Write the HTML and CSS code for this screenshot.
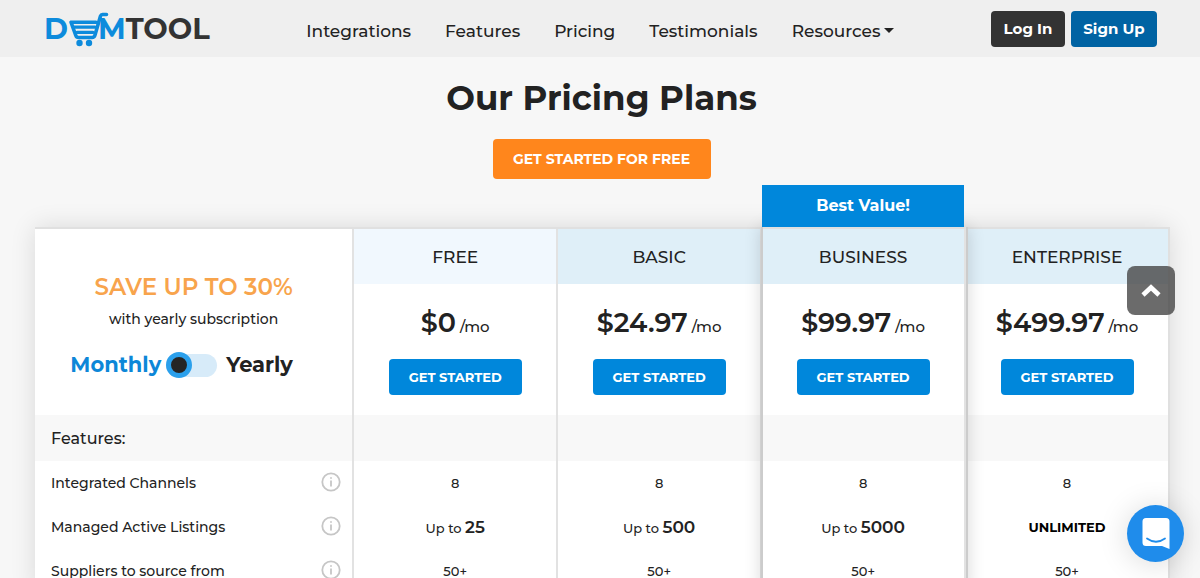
FILE: index.html
```html
<!DOCTYPE html>
<html lang="en">
<head>
<meta charset="utf-8">
<meta name="viewport" content="width=device-width, initial-scale=1">
<title>DSMTool Pricing</title>
<link rel="stylesheet" href="styles.css">
</head>
<body>
<header class="site-header">
  <a class="logo" href="#" aria-label="DSMTool">
    <span class="logo-blue">D</span>
    <svg class="logo-cart" viewBox="0 0 42 36" aria-hidden="true">
      <g fill="none" stroke="#0d8bdc" stroke-width="3.6" stroke-linejoin="round" stroke-linecap="round">
        <path d="M38.500 3.500H34.500Q33 3.500 32.500 5L27 24Q26.300 26.500 24 26.500H10.500Q8.500 26.500 7.800 24.500L3 11.200H28"/>
        <path d="M6 16.200H27M9 21.400H25" stroke-width="3.2"/>
      </g>
      <circle cx="11.500" cy="32" r="3.200" fill="#0d8bdc"/>
      <circle cx="21" cy="32" r="3.200" fill="#0d8bdc"/>
    </svg>
    <span class="logo-blue logo-m">M</span><span class="logo-dark">TOOL</span>
  </a>
  <nav class="main-nav">
    <a href="#">Integrations</a>
    <a href="#">Features</a>
    <a href="#">Pricing</a>
    <a href="#">Testimonials</a>
    <a class="has-menu" href="#">Resources</a>
  </nav>
  <div class="account">
    <button class="btn btn-dark" type="button">Log In</button>
    <button class="btn btn-navy" type="button">Sign Up</button>
  </div>
</header>

<main>
  <section class="intro">
    <h1>Our Pricing Plans</h1>
    <button class="btn btn-orange" type="button">GET STARTED FOR FREE</button>
  </section>

  <div class="plans">
    <table>
      <colgroup><col class="col-feature"><col class="col-plan"><col class="col-plan"><col class="col-plan"><col class="col-plan"></colgroup>
      <thead>
        <tr class="names">
          <td class="offer" rowspan="2">
            <p class="save">SAVE UP TO 30%</p>
            <p class="note">with yearly subscription</p>
            <label class="billing">
              <span class="monthly">Monthly</span>
              <input class="switch" type="checkbox" aria-label="Yearly billing">
              <span>Yearly</span>
            </label>
          </td>
          <th class="name-free" scope="col">FREE</th>
          <th scope="col">BASIC</th>
          <th scope="col"><span class="best-tab">Best Value!</span>BUSINESS</th>
          <th scope="col">ENTERPRISE</th>
        </tr>
        <tr class="prices">
          <td><p class="price">$0<small> /mo</small></p><button class="btn btn-blue" type="button">GET STARTED</button></td>
          <td><p class="price">$24.97<small> /mo</small></p><button class="btn btn-blue" type="button">GET STARTED</button></td>
          <td><p class="price">$99.97<small> /mo</small></p><button class="btn btn-blue" type="button">GET STARTED</button></td>
          <td><p class="price">$499.97<small> /mo</small></p><button class="btn btn-blue" type="button">GET STARTED</button></td>
        </tr>
      </thead>
      <tbody>
        <tr class="group"><th scope="row">Features:</th><td></td><td></td><td></td><td></td></tr>
        <tr>
          <th scope="row"><div class="feature">Integrated Channels <button class="info" type="button" aria-label="About integrated channels"><svg viewBox="0 0 20 20"><circle cx="10" cy="10" r="8.700"/><path d="M10 5.200v1.600M10 8.500v6"/></svg></button></div></th>
          <td>8</td><td>8</td><td>8</td><td>8</td>
        </tr>
        <tr>
          <th scope="row"><div class="feature">Managed Active Listings <button class="info" type="button" aria-label="About managed active listings"><svg viewBox="0 0 20 20"><circle cx="10" cy="10" r="8.700"/><path d="M10 5.200v1.600M10 8.500v6"/></svg></button></div></th>
          <td>Up to <b>25</b></td><td>Up to <b>500</b></td><td>Up to <b>5000</b></td><td><strong>UNLIMITED</strong></td>
        </tr>
        <tr>
          <th scope="row"><div class="feature">Suppliers to source from <button class="info" type="button" aria-label="About suppliers to source from"><svg viewBox="0 0 20 20"><circle cx="10" cy="10" r="8.700"/><path d="M10 5.200v1.600M10 8.500v6"/></svg></button></div></th>
          <td>50+</td><td>50+</td><td>50+</td><td>50+</td>
        </tr>
      </tbody>
    </table>
  </div>
</main>

<button class="to-top" type="button" aria-label="Back to top">
  <svg viewBox="0 0 24 18"><path d="M4 13L12 5.500L20 13" fill="none" stroke="#fff" stroke-width="4.600"/></svg>
</button>
<button class="chat" type="button" aria-label="Open chat">
  <svg viewBox="0 0 28 32"><path d="M4 0H24Q27.500 0 27.500 3.500V31L20 28H4Q.5 28 .5 24.500V3.500Q.5 0 4 0Z" fill="#fff"/><path d="M5 20.500Q14 27 23 20.500" fill="none" stroke="#1f8ceb" stroke-width="1.800" stroke-linecap="round"/></svg>
</button>
</body>
</html>
```
FILE: styles.css
```css
*, *::before, *::after { box-sizing: border-box; }

body {
  margin: 0;
  background: #f7f7f7;
  color: #222;
  font-family: Montserrat, Inter, "Liberation Sans", sans-serif;
  font-size: 14px;
  font-weight: 500;
}

p, h1 { margin: 0; }
a { color: inherit; text-decoration: none; }
button { font: inherit; cursor: pointer; }

.site-header {
  display: flex;
  align-items: center;
  justify-content: space-between;
  height: 57px;
  padding: 0 43px 0 44px;
  background: #efefef;
}

.logo {
  display: flex;
  align-items: center;
  font-size: 29px;
  font-weight: 700;
  line-height: 36px;
}
.logo-blue { color: #0d8bdc; }
.logo-dark { color: #333; }
.logo-cart { width: 42px; height: 36px; }
.logo-m { margin-left: -12px; }

.main-nav {
  display: flex;
  gap: 34px;
  padding-top: 4px;
  font-size: 17px;
  line-height: 24px;
}
.has-menu { display: flex; align-items: center; gap: 4px; }
.has-menu::after {
  content: "";
  border: 5px solid transparent;
  border-top-color: #222;
  border-bottom: 0;
}

.account { display: flex; gap: 6px; }

.btn {
  height: 36px;
  padding: 0;
  border: 0;
  border-radius: 4px;
  color: #fff;
  font-weight: 700;
}
.btn-dark, .btn-navy { font-size: 15px; }
.btn-dark { width: 74px; background: #333; }
.btn-navy { width: 86px; background: #0063a3; }
.btn-blue { width: 133px; background: #0087db; font-size: 13px; }
.btn-orange {
  width: 218px;
  height: 40px;
  background: #ff861c;
  font-size: 14px;
}

.intro {
  margin: 0 32px 0 35px;
  padding: 17px 0 48px;
  text-align: center;
}
.intro h1 {
  margin-bottom: 17px;
  font-size: 34px;
  font-weight: 700;
  line-height: 48px;
}

.plans {
  position: relative;
  margin: 0 30px 0 35px;
  box-shadow: 0 0 24px rgba(0, 0, 0, .12);
}
/* raised outline around the highlighted plan */
.plans::after {
  content: "";
  position: absolute;
  top: 0;
  bottom: 0;
  left: 64%;
  width: calc(18% + 2px);
  border: solid #ccc;
  border-width: 0 2px;
  box-shadow: 0 0 16px rgba(0, 0, 0, .16);
  pointer-events: none;
}

table {
  width: 100%;
  table-layout: fixed;
  border-collapse: separate;
  border-spacing: 0;
  border: 2px solid #e0e0e0;
  border-width: 2px 2px 0 0;
  background: #fff;
}
.col-feature { width: 28%; }
.col-plan { width: 18%; }

th, td {
  height: 44px;
  padding: 0;
  border-left: 2px solid #e2e2e2;
  text-align: center;
  font-weight: 500;
}
th:first-child, .offer { border-left-width: 0; }
tbody th { padding: 0 11px 0 16px; text-align: left; }
tbody td { font-size: 13px; }

.names th {
  position: relative;
  height: 55px;
  background: #dfeff8;
  font-size: 17px;
}
.names .name-free { background: #f1f8fe; }
.best-tab {
  position: absolute;
  z-index: 1;
  left: 0;
  right: 0;
  bottom: calc(100% + 2px);
  height: 42px;
  background: #0087db;
  color: #fff;
  font-size: 16px;
  font-weight: 700;
  line-height: 42px;
}

.prices td { height: 131px; padding-top: 23px; vertical-align: top; }
.price {
  margin-bottom: 16px;
  font-size: 27px;
  font-weight: 600;
  line-height: 32px;
}
.price small { font-size: 15px; font-weight: 500; }

.offer { padding-top: 7px; }
.save { color: #f8a44c; font-size: 23px; font-weight: 600; line-height: 30px; }
.note { margin: 5px 0 20px; font-size: 14px; line-height: 24px; }
.billing {
  display: flex;
  align-items: center;
  justify-content: center;
  gap: 5px;
  padding-right: 24px;
  font-size: 21px;
  font-weight: 700;
  line-height: 28px;
}
.monthly { color: #0d87d8; }
.switch {
  appearance: none;
  display: flex;
  align-items: center;
  width: 51px;
  height: 23px;
  margin: 0 4px 0 0;
  border-radius: 12px;
  background: #d7ebf9;
}
.switch::before {
  content: "";
  width: 26px;
  height: 26px;
  flex: none;
  border: 5px solid #2ba0ec;
  border-radius: 50%;
  background: #252525;
}
.switch:checked { justify-content: flex-end; }

.group th, .group td { height: 46px; background: #f8f8f8; }
.group th { font-size: 16px; }
.feature { display: flex; align-items: center; justify-content: space-between; }
.info {
  display: flex;
  padding: 0 0 2px;
  border: 0;
  background: none;
}
.info svg {
  width: 20px;
  height: 20px;
  fill: none;
  stroke: #c6c6c6;
  stroke-width: 1.8;
}
td b { font-size: 17px; font-weight: 600; }
strong { color: #000; font-weight: 700; }

.to-top, .chat {
  position: fixed;
  z-index: 2;
  display: flex;
  align-items: center;
  justify-content: center;
  padding: 0;
  border: 0;
}
.to-top {
  top: 266px;
  right: 25px;
  width: 48px;
  height: 49px;
  border-radius: 8px;
  background: rgba(70, 70, 70, .8);
}
.to-top svg { width: 24px; height: 18px; }
.chat {
  right: 16px;
  bottom: 16px;
  width: 57px;
  height: 57px;
  border-radius: 50%;
  background: #1f8ceb;
  box-shadow: 0 2px 30px rgba(0, 0, 0, .15);
}
.chat svg { width: 28px; height: 32px; }
```
